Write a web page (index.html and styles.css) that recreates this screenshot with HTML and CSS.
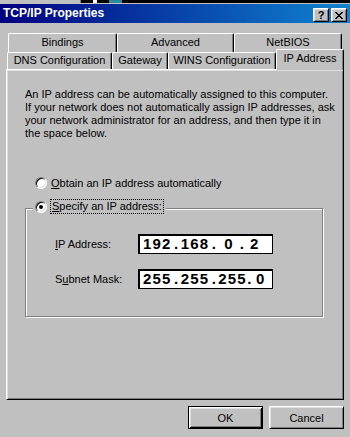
FILE: index.html
```html
<!DOCTYPE html>
<html lang="en">
<head>
    <meta charset="UTF-8">
    <title>TCP/IP Properties</title>
    <link rel="stylesheet" href="styles.css">
</head>
<body>
    <div class="desk">
        <span class="desk-grey"></span>
        <span class="desk-edge"></span>
        <span class="desk-gap"></span>
        <span class="desk-white"></span>
        <span class="desk-gap"></span>
        <span class="desk-cyan"></span>
    </div>

    <div class="window">
        <div class="titlebar">
            <span class="title">TCP/IP Properties</span>
            <div class="title-btns">
                <button class="tbtn help">?</button>
                <button class="tbtn close">
                    <svg width="8" height="7" viewBox="0 0 8 7" shape-rendering="crispEdges">
                        <path d="M0 0h2v1H0zM6 0h2v1H6zM1 1h2v1H1zM5 1h2v1H5zM2 2h4v1H2zM3 3h2v1H3zM2 4h4v1H2zM1 5h2v1H1zM5 5h2v1H5zM0 6h2v1H0zM6 6h2v1H6z" fill="#000"/>
                    </svg>
                </button>
            </div>
        </div>

        <div class="dialog-body">
            <div class="tabs">
                <div class="tab-row back">
                    <div class="tab t-bindings">Bindings</div>
                    <div class="tab t-advanced">Advanced</div>
                    <div class="tab t-netbios">NetBIOS</div>
                </div>
                <div class="tab-row front">
                    <div class="tab t-dns">DNS Configuration</div>
                    <div class="tab t-gateway">Gateway</div>
                    <div class="tab t-wins">WINS Configuration</div>
                    <div class="tab t-ip active">IP Address</div>
                </div>
            </div>

            <div class="panel">
                <p class="intro">An IP address can be automatically assigned to this computer.<br>
                If your network does not automatically assign IP addresses, ask<br>
                your network administrator for an address, and then type it in<br>
                the space below.</p>

                <div class="radio-row auto">
                    <span class="radio"></span>
                    <span class="radio-label"><u>O</u>btain an IP address automatically</span>
                </div>

                <div class="group">
                    <div class="radio-row legend">
                        <span class="radio checked"></span>
                        <span class="radio-label focus"><u>S</u>pecify an IP address:</span>
                    </div>

                    <div class="field-row">
                        <span class="field-label"><u>I</u>P Address:</span>
                        <div class="ipbox">
                            <span class="oct">192</span><span class="dot">.</span><span class="oct">168</span><span class="dot">.</span><span class="oct single">0</span><span class="dot short">.</span><span class="oct last">2</span>
                        </div>
                    </div>

                    <div class="field-row">
                        <span class="field-label">S<u>u</u>bnet Mask:</span>
                        <div class="ipbox">
                            <span class="oct">255</span><span class="dot">.</span><span class="oct">255</span><span class="dot">.</span><span class="oct">255</span><span class="dot tail">.</span><span class="oct zero">0</span>
                        </div>
                    </div>
                </div>
            </div>

            <div class="buttons">
                <button class="btn default">OK</button>
                <button class="btn">Cancel</button>
            </div>
        </div>
    </div>
</body>
</html>
```

FILE: styles.css
```css
body {
    margin: 0;
    width: 350px;
    height: 437px;
    overflow: hidden;
    background: #c0c0c0;
    font-family: "Liberation Sans", Arial, sans-serif;
    font-size: 11px;
    color: #000;
}

/* strip of desktop above the window */
.desk {
    display: flex;
    height: 3px;
    background: #000;
}

.desk-grey {
    width: 80px;
    background: #c0c0c0;
}

.desk-edge {
    width: 1px;
    background: #808080;
}

.desk-gap {
    width: 12px;
}

.desk-white {
    width: 4px;
    background: #fff;
}

.desk-cyan {
    width: 13px;
    background: #2b8c9c;
}

.window {
    border-top: 1px solid #c0c0c0;
}

.titlebar {
    height: 19px;
    display: flex;
    justify-content: space-between;
    background: linear-gradient(to right, #000080, #1084d0);
    color: #fff;
}

.title {
    font-weight: bold;
    font-size: 12px;
    line-height: 19px;
    padding-left: 3px;
}

.title-btns {
    display: flex;
    gap: 2px;
    padding: 4px 3px 0 0;
}

.tbtn {
    width: 16px;
    height: 14px;
    box-sizing: border-box;
    padding: 0;
    background: #c0c0c0;
    border: 1px solid;
    border-color: #fff #000 #000 #fff;
    box-shadow: inset 1px 1px #dfdfdf, inset -1px -1px #808080;
    display: flex;
    align-items: center;
    justify-content: center;
    font-family: "Liberation Sans", Arial, sans-serif;
    font-weight: bold;
    font-size: 11px;
    line-height: 12px;
    color: #000;
}

.tbtn svg {
    display: block;
}

.dialog-body {
    padding: 10px 6px 0 6px;
}

/* tabs */
.tabs {
    position: relative;
    z-index: 1;
}

.tab-row {
    display: flex;
    align-items: flex-end;
}

.tab-row.back {
    margin-left: 2px;
    height: 19px;
}

.tab-row.front {
    margin-left: 1px;
    margin-top: -3px;
    position: relative;
}

.tab {
    box-sizing: border-box;
    background: #c0c0c0;
    border: 1px solid;
    border-color: #fff #000 #fff #fff;
    border-bottom: none;
    border-radius: 2px 2px 0 0;
    box-shadow: inset -1px 0 #808080;
    text-align: center;
    white-space: nowrap;
}

.back .tab {
    height: 19px;
    line-height: 17px;
}

.front .tab {
    height: 17px;
    line-height: 15px;
}

.front .tab.active {
    height: 21px;
    line-height: 16px;
    margin-bottom: -1px;
}

.t-bindings { width: 109px; }
.t-advanced { width: 117px; }
.t-netbios { width: 108px; }
.t-dns { width: 105px; }
.t-gateway { width: 56px; }
.t-wins { width: 108px; }
.t-ip { width: 68px; }

/* page */
.panel {
    box-sizing: border-box;
    width: 338px;
    height: 331px;
    border: 1px solid;
    border-color: #fff #000 #000 #fff;
    box-shadow: inset 1px 1px #dfdfdf, inset -1px -1px #808080;
    padding: 18px 0 0 18px;
}

.intro {
    margin: 0;
    line-height: 13px;
    white-space: nowrap;
}

.radio-row {
    display: flex;
    align-items: center;
}

.radio-row.auto {
    margin-top: 36px;
    height: 14px;
    padding-left: 10px;
}

.radio {
    flex: none;
    width: 12px;
    height: 12px;
    box-sizing: border-box;
    border-radius: 50%;
    border: 1px solid;
    border-color: #808080 #fff #fff #808080;
    box-shadow: inset 1px 1px #000, inset -1px -1px #dfdfdf;
    background: #fff;
    display: flex;
    align-items: center;
    justify-content: center;
}

.radio.checked::after {
    content: "";
    width: 4px;
    height: 4px;
    border-radius: 50%;
    background: #000;
}

.radio-label {
    margin-left: 4px;
    line-height: 13px;
}

.radio-label.focus {
    margin-left: 3px;
    padding: 0 1px;
    border: 1px dotted #000;
}

.group {
    box-sizing: border-box;
    width: 298px;
    margin-top: 18px;
    border: 1px solid #808080;
    box-shadow: inset 1px 1px #fff, 1px 1px #fff;
    padding-bottom: 27px;
}

.radio-row.legend {
    width: fit-content;
    height: 15px;
    margin: -10px 0 0 7px;
    padding: 0 2px;
    background: #c0c0c0;
}

.field-row {
    display: flex;
    align-items: center;
    margin: 20px 0 0 29px;
}

.field-row + .field-row {
    margin-top: 15px;
}

.field-label {
    width: 83px;
}

/* ip address control */
.ipbox {
    box-sizing: border-box;
    width: 135px;
    height: 20px;
    padding-left: 4px;
    background: #fff;
    border: 1px solid #000;
    box-shadow: inset 1px 1px #000;
    display: flex;
    font-weight: bold;
    font-size: 15px;
    line-height: 17px;
    letter-spacing: 1.2px;
    white-space: nowrap;
}

.dot {
    width: 9px;
    text-align: center;
    letter-spacing: 0;
}

.oct.single {
    margin-left: 6px;
}

.dot.short {
    width: auto;
    margin-left: 6px;
}

.oct.last {
    margin-left: 6px;
}

.dot.tail {
    width: 5px;
}

.oct.zero {
    margin-left: 4px;
}

/* dialog buttons */
.buttons {
    display: flex;
    justify-content: flex-end;
    gap: 6px;
    margin-top: 6px;
}

.btn {
    width: 75px;
    height: 23px;
    box-sizing: border-box;
    padding: 0;
    background: #c0c0c0;
    border: 1px solid;
    border-color: #fff #000 #000 #fff;
    box-shadow: inset 1px 1px #dfdfdf, inset -1px -1px #808080;
    font-family: "Liberation Sans", Arial, sans-serif;
    font-size: 11px;
    color: #000;
}

.btn.default {
    border-color: #000;
    box-shadow: inset 1px 1px #fff, inset -1px -1px #000, inset 2px 2px #dfdfdf, inset -2px -2px #808080;
}
```
